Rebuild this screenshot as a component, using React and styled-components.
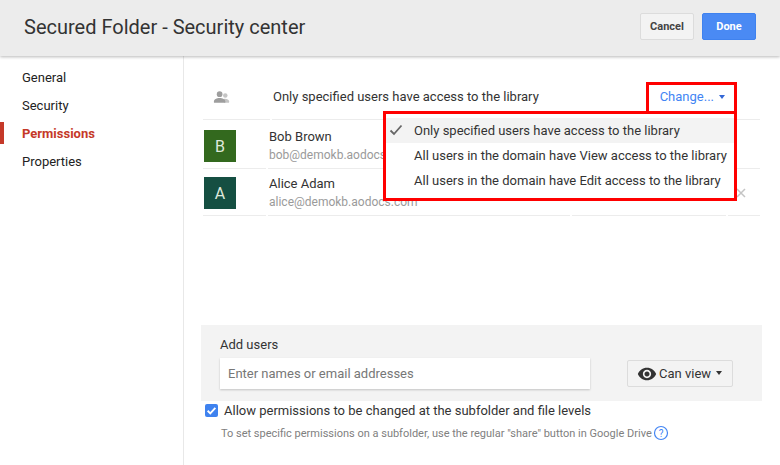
import React from 'react';
import styled, { createGlobalStyle } from 'styled-components';

const GlobalStyle = createGlobalStyle`
    html, body {
        margin: 0;
        padding: 0;
        background: #fff;
        font-family: Roboto, "Liberation Sans", sans-serif;
    }
`;

const Page = styled.div`
    width: 780px;
    height: 465px;
    overflow: hidden;
    position: relative;
    display: flex;
    flex-direction: column;
`;

const Header = styled.header`
    height: 56px;
    flex: none;
    background: #ececec;
    box-shadow: 0 1px 3px rgba(0,0,0,0.28);
    display: flex;
    align-items: center;
    justify-content: space-between;
    padding: 0 24px 0 24px;
    z-index: 2;
`;

const Title = styled.h1`
    margin: -2px 0 0;
    font-size: 20px;
    font-weight: 400;
    color: #333;
`;

const HeaderActions = styled.div`
    display: flex;
    gap: 8px;
    margin-top: -3px;
`;

const HeaderButton = styled.button`
    height: 27px;
    width: 54px;
    border-radius: 2px;
    border: 1px solid ${({ $primary }) => ($primary ? '#3f82ef' : '#dcdcdc')};
    background: ${({ $primary }) => ($primary ? '#4a8af4' : '#f3f3f3')};
    color: ${({ $primary }) => ($primary ? '#fff' : '#444')};
    font-family: inherit;
    font-size: 11px;
    font-weight: 700;
    padding: 0;
`;

const Body = styled.div`
    flex: 1;
    display: flex;
    min-height: 0;
`;

const Sidebar = styled.nav`
    width: 183px;
    flex: none;
    border-right: 1px solid #e8e8e8;
    padding-top: 7px;
`;

const NavItem = styled.div`
    display: flex;
    align-items: center;
    padding-left: ${({ $active }) => ($active ? '18px' : '22px')};
    border-left: ${({ $active }) => ($active ? '4px solid #c53929' : 'none')};
    height: ${({ $active }) => ($active ? '22px' : '28px')};
    margin: ${({ $active }) => ($active ? '3px 0' : '0')};
    font-size: 13px;
    font-weight: ${({ $active }) => ($active ? 700 : 400)};
    color: ${({ $active }) => ($active ? '#c53929' : '#222')};
`;

const Main = styled.main`
    flex: 1;
    padding: 0 18px 0 17px;
    display: flex;
    flex-direction: column;
    min-width: 0;
`;

const Row = styled.div`
    height: ${({ $height }) => $height}px;
    flex: none;
    display: flex;
    gap: 2px;
    margin: 0 2px;
`;

const Cell = styled.div`
    box-sizing: border-box;
    border-bottom: 1px solid #ececec;
    width: ${({ $width }) => ($width ? `${$width}px` : 'auto')};
    flex: ${({ $width }) => ($width ? 'none' : '1')};
    display: flex;
    min-width: 0;
    position: relative;
`;

const IconCell = styled(Cell)`
    padding: 34px 0 0 10px;
    align-items: flex-start;
`;

const AccessCell = styled(Cell)`
    padding-top: 17px;
    align-items: center;
    justify-content: space-between;
    font-size: 13px;
    color: #333;
`;

const AccessText = styled.span`
    margin-left: 1px;
`;

const ChangeLink = styled.span`
    color: #4285f4;
    font-size: 13px;
    display: inline-flex;
    align-items: center;
    gap: 5px;
    margin-right: 35px;
`;

const Caret = styled.span`
    display: inline-block;
    width: 0;
    height: 0;
    margin-top: 2px;
    border-left: 3.5px solid transparent;
    border-right: 3.5px solid transparent;
    border-top: 4px solid ${({ $color }) => $color || '#333'};
`;

const AvatarCell = styled(Cell)`
    padding: ${({ $top }) => $top}px 0 0 1px;
`;

const Avatar = styled.div`
    width: 32px;
    height: 32px;
    flex: none;
    background: ${({ $color }) => $color};
    color: #dfe8dc;
    font-size: 16px;
    display: flex;
    align-items: center;
    justify-content: center;
`;

const InfoCell = styled(Cell)`
    flex-direction: column;
    gap: 4px;
    padding: ${({ $top }) => $top - 1}px 0 0 1px;
    overflow: visible;
    white-space: nowrap;
`;

const UserName = styled.div`
    font-size: 13px;
    color: #333;
    line-height: 15px;
`;

const UserEmail = styled.div`
    font-size: 12px;
    color: #9a9a9a;
    line-height: 15px;
`;

const RemoveIcon = styled.svg`
    position: absolute;
    right: 14px;
    top: 19px;
`;

const AddPanel = styled.section`
    margin-top: auto;
    height: 76px;
    flex: none;
    box-sizing: border-box;
    background: #f3f3f3;
    padding: 12px 19px 0;
`;

const AddLabel = styled.div`
    font-size: 13px;
    color: #333;
    line-height: 15px;
`;

const AddRow = styled.div`
    display: flex;
    align-items: center;
    justify-content: space-between;
    margin-top: 6px;
    padding-right: 10px;
`;

const NameInput = styled.input`
    width: 370px;
    height: 31px;
    box-sizing: border-box;
    border: none;
    background: #fff;
    box-shadow: 0 1px 2px rgba(0,0,0,0.2);
    padding: 0 8px;
    font-family: inherit;
    font-size: 13px;
    color: #333;

    &::placeholder {
        color: #777;
    }
`;

const RoleButton = styled.button`
    width: 106px;
    height: 27px;
    border: 1px solid #dcdcdc;
    border-radius: 2px;
    background: #f3f3f3;
    display: flex;
    align-items: center;
    gap: 2px;
    font-family: inherit;
    font-size: 13px;
    color: #333;
    padding: 0 0 0 9px;
`;

const RoleCaret = styled(Caret)`
    margin: -2px 0 0 3px;
`;

const CheckRow = styled.label`
    display: flex;
    align-items: center;
    gap: 6px;
    margin: 1px 0 0 4px;
    font-size: 13px;
    color: #333;
    height: 16px;
`;

const CheckBox = styled.span`
    width: 13px;
    height: 13px;
    border-radius: 2px;
    background: #3f82ef;
    display: flex;
    align-items: center;
    justify-content: center;
`;

const Hint = styled.div`
    display: flex;
    align-items: center;
    gap: 1px;
    margin: 7px 0 24px 20px;
    font-size: 11px;
    color: #808080;
`;

const Menu = styled.div`
    position: absolute;
    top: 111px;
    left: 383px;
    width: 354px;
    height: 90px;
    box-sizing: border-box;
    background: #fff;
    border: 3px solid #f00;
    padding-top: 4px;
    z-index: 3;
`;

const MenuItem = styled.div`
    height: 25px;
    display: flex;
    align-items: center;
    padding-left: 28px;
    position: relative;
    font-size: 13px;
    color: #333;
    background: ${({ $selected }) => ($selected ? '#f3f3f3' : 'transparent')};
`;

const MenuCheck = styled.svg`
    position: absolute;
    left: 3px;
    top: 6px;
`;

const ChangeBox = styled.div`
    position: absolute;
    top: 82px;
    left: 646px;
    width: 91px;
    height: 32px;
    box-sizing: border-box;
    border: 3px solid #f00;
    border-bottom: none;
    z-index: 3;
`;

const users = [
    { initial: 'B', color: '#33691e', name: 'Bob Brown', email: 'bob@demokb.aodocs.com', height: 49, top: 10 },
    { initial: 'A', color: '#154f42', name: 'Alice Adam', email: 'alice@demokb.aodocs.com', height: 47, top: 8, removable: true },
];

const options = [
    'Only specified users have access to the library',
    'All users in the domain have View access to the library',
    'All users in the domain have Edit access to the library',
];

const App = () => (
    <Page>
        <GlobalStyle />
        <Header>
            <Title>Secured Folder - Security center</Title>
            <HeaderActions>
                <HeaderButton>Cancel</HeaderButton>
                <HeaderButton $primary>Done</HeaderButton>
            </HeaderActions>
        </Header>
        <Body>
            <Sidebar>
                <NavItem>General</NavItem>
                <NavItem>Security</NavItem>
                <NavItem $active>Permissions</NavItem>
                <NavItem>Properties</NavItem>
            </Sidebar>
            <Main>
                <Row $height={64}>
                    <IconCell $width={67}>
                        <svg width="17" height="14" viewBox="0 0 18 14">
                            <circle cx="7" cy="4" r="3" fill="#9e9e9e" />
                            <circle cx="13" cy="5.5" r="2.4" fill="#c4c4c4" />
                            <path d="M11 9c3-.6 6 .5 6 2.5V13h-5z" fill="#c4c4c4" />
                            <path d="M1 13v-1.5C1 9.3 4 8 7 8s6 1.3 6 3.5V13z" fill="#9e9e9e" />
                        </svg>
                    </IconCell>
                    <AccessCell>
                        <AccessText>Only specified users have access to the library</AccessText>
                        <ChangeLink>Change... <Caret $color="#3367d6" /></ChangeLink>
                    </AccessCell>
                </Row>
                {users.map((user) => (
                    <Row key={user.email} $height={user.height}>
                        <AvatarCell $width={63} $top={user.top}>
                            <Avatar $color={user.color}>{user.initial}</Avatar>
                        </AvatarCell>
                        <InfoCell $width={302} $top={user.top}>
                            <UserName>{user.name}</UserName>
                            <UserEmail>{user.email}</UserEmail>
                        </InfoCell>
                        <Cell $width={154} />
                        <Cell>
                            {user.removable && (
                                <RemoveIcon width="10" height="10" viewBox="0 0 10 10">
                                    <path d="M1 1l8 8M9 1l-8 8" stroke="#c4c4c4" strokeWidth="1.5" />
                                </RemoveIcon>
                            )}
                        </Cell>
                    </Row>
                ))}
                <AddPanel>
                    <AddLabel>Add users</AddLabel>
                    <AddRow>
                        <NameInput placeholder="Enter names or email addresses" />
                        <RoleButton>
                            <svg width="20" height="20" viewBox="0 0 24 24">
                                <path fill="#333" d="M12 4.5C7 4.5 2.73 7.61 1 12c1.73 4.39 6 7.5 11 7.5s9.27-3.11 11-7.5c-1.73-4.39-6-7.5-11-7.5zM12 17c-2.76 0-5-2.24-5-5s2.24-5 5-5 5 2.24 5 5-2.24 5-5 5zm0-8c-1.66 0-3 1.34-3 3s1.34 3 3 3 3-1.34 3-3-1.34-3-3-3z" />
                            </svg>
                            Can view
                            <RoleCaret $color="#333" />
                        </RoleButton>
                    </AddRow>
                </AddPanel>
                <CheckRow>
                    <CheckBox>
                        <svg width="11" height="11" viewBox="0 0 10 10">
                            <path d="M1.5 5.2l2.4 2.4 4.6-5" stroke="#fff" strokeWidth="1.7" fill="none" />
                        </svg>
                    </CheckBox>
                    Allow permissions to be changed at the subfolder and file levels
                </CheckRow>
                <Hint>
                    To set specific permissions on a subfolder, use the regular "share" button in Google Drive
                    <svg width="16" height="16" viewBox="0 0 16 16">
                        <circle cx="8" cy="8" r="6.5" fill="none" stroke="#4285f4" strokeWidth="1.2" />
                        <text x="8" y="11.5" textAnchor="middle" fontSize="10" fill="#4285f4" fontFamily="Roboto">?</text>
                    </svg>
                </Hint>
            </Main>
        </Body>
        <ChangeBox />
        <Menu>
            {options.map((option, index) => (
                <MenuItem key={option} $selected={index === 0}>
                    {index === 0 && (
                        <MenuCheck width="14" height="12" viewBox="0 0 14 12">
                            <path d="M1.5 6.5l3.5 3.5 7.5-8.5" stroke="#666" strokeWidth="1.8" fill="none" />
                        </MenuCheck>
                    )}
                    {option}
                </MenuItem>
            ))}
        </Menu>
    </Page>
);

export default App;
